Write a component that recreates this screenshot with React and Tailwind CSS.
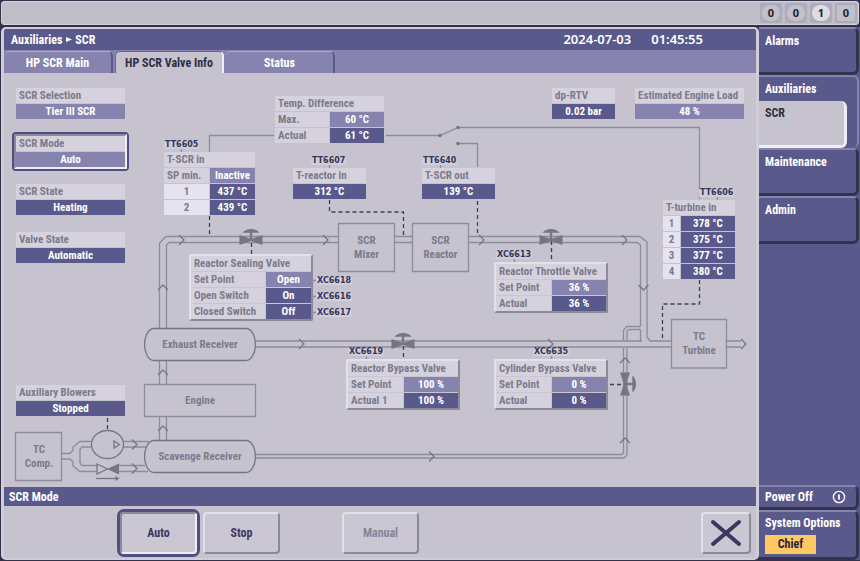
import { useState } from "react";
import clsx from "clsx";

const TABS = ["HP SCR Main", "HP SCR Valve Info", "Status"];

const TONES = {
  dark: "bg-[#5a598b] text-white text-center",
  light: "bg-[#8684af] text-white text-center",
  index: "bg-[#e6e3f0] text-[#7b7b8c] text-center",
  label: "bg-[#d5d2dd] text-[#7b7b8c] text-left pl-[3px]",
};

// Title row on top, then one row per value: [label, value, tone, labelTone]
function Readout({ title, rows, labelWidth = "w-1/2", className }) {
  const hasLabels = rows[0][0] !== "";

  return (
    <table
      className={clsx(
        "border-separate border-spacing-px table-fixed text-[11px] leading-[15px] font-bold whitespace-nowrap",
        className,
      )}
    >
      {hasLabels && (
        <colgroup>
          <col className={labelWidth} />
          <col />
        </colgroup>
      )}
      <thead>
        <tr>
          <th colSpan={hasLabels ? 2 : 1} className={clsx("h-[15px] p-0", TONES.label)}>
            {title}
          </th>
        </tr>
      </thead>
      <tbody>
        {rows.map(([label, value, tone, labelTone = "label"]) => (
          <tr key={label || value}>
            {hasLabels && (
              <th scope="row" className={clsx("h-[15px] p-0", TONES[labelTone])}>
                {label}
              </th>
            )}
            <td className={clsx("h-[15px] p-0", TONES[tone])}>{value}</td>
          </tr>
        ))}
      </tbody>
    </table>
  );
}

// Raised frame round the readout of a valve
function ValveCard({ className, ...readout }) {
  return (
    <div
      className={clsx(
        "absolute rounded-[2px] border-2 border-t-[#e2e0ea] border-l-[#e2e0ea] border-r-[#8c8a98] border-b-[#8c8a98] bg-[#c9c6d2]",
        className,
      )}
    >
      <div className="-m-px">
        <Readout className="w-full" {...readout} />
      </div>
    </div>
  );
}

function Tag({ children, className }) {
  return (
    <span
      className={clsx(
        "absolute bg-[#d0cdd8] px-px font-['DejaVu_Sans',sans-serif] text-[8px] leading-[8px] font-bold text-[#35355a]",
        className,
      )}
    >
      {children}
    </span>
  );
}

function Vessel({ children, className }) {
  return (
    <div
      className={clsx(
        "absolute flex items-center justify-center text-center text-[11px] leading-[14px] font-bold text-[#7b7b8c]",
        className,
      )}
    >
      {children}
    </div>
  );
}

function Valve({ x, y, turn = 0 }) {
  return (
    <g transform={`translate(${x} ${y}) rotate(${turn})`} fill="#757584" stroke="none">
      <path d="M-11.5 -5 L0 -1 L11.5 -5 V5 L0 1 L-11.5 5 Z" />
      <path d="M-8.5 -7.3 Q-5.5 -11 0 -11 Q5.5 -11 8.5 -7.3 Z" />
      <path d="M-1.2 -8 H1.2 V0 H-1.2 Z" />
    </g>
  );
}

function Flow({ x, y, turn = 0 }) {
  return <path transform={`translate(${x} ${y}) rotate(${turn})`} d="M-5 -5 L0 0 L-5 5" stroke="#757584" />;
}

function Piping() {
  return (
    <svg
      className="absolute top-0 left-0 h-[414px] w-[752px]"
      viewBox="4 73 752 414"
      fill="none"
      stroke="#8d8c9b"
      strokeWidth="1.3"
      aria-hidden="true"
    >
      {/* signal lines of the temperature difference */}
      <path d="M209.5 152 V135.5 H274 M386 135.5 H440 L458 127.5 H699.5 V199 M458 143.5 H477.5 V167" />
      <g fill="#757584" stroke="none">
        <circle cx="440" cy="135.5" r="1.8" />
        <circle cx="458" cy="127.5" r="1.8" />
        <circle cx="458" cy="143.5" r="1.8" />
      </g>

      {/* tag ticks */}
      <path d="M181.5 148 V152 M329.5 164 V168 M440.5 164 V168 M717.5 196 V200 M514.5 258 V262 M366.5 355 V359 M551.5 355 V359 M313 280.5 H317 M313 296.5 H317 M313 312.5 H317" />

      {/* exhaust to turbine */}
      <path d="M159.5 328 V243 L166 236.5 H338 M166.5 328 V245 L169 242.5 H338" />
      <path d="M394 236.5 H412 M394 242.5 H412" />
      <path d="M468 236.5 H640 L647 242 V337 L650 341 H671 M468 242.5 H637 L640.5 245 V326.5 M640.5 329.5 V341" />
      <path d="M256 341 H642 M256 347 H671" />
      <path d="M640.5 326.5 H627 L623.5 330 V341 M640.5 329.5 H629 L627 331 V341" />
      <path d="M727 341 H741 M727 347 H741" />

      {/* receiver, engine, scavenge */}
      <path d="M159.5 360 V384 M166.5 360 V384 M159.5 416 V440 M166.5 416 V440" />
      <path d="M256 454.5 H622 L623.5 453 V348 M256 458 H624 L627 455 V348" />

      {/* blower loop */}
      <path d="M62 453.5 H70 L73 450 V447 L80 441.5 H92 M62 459 H70 L73 462 V466 L80 471.5 H97" />
      <path d="M92 447 H82 L80 449 V463 L82 465.5 H97" />
      <path d="M123 441.5 H149 M123 447 H146 M119 465.5 H145 M119 471.5 H148" />

      {/* vessels */}
      <path d="M338.5 223.5 H394.5 V271.5 H338.5 Z M412.5 223.5 H468.5 V271.5 H412.5 Z M671.5 319.5 H726.5 V368 H671.5 Z" />
      <path d="M144.5 384.5 H255.5 V416.5 H144.5 Z M15.5 432.5 H61.5 V480.5 H15.5 Z" />
      <g stroke="#757584" fill="#c6c3cf">
        <path d="M154 328.5 H246 C252 328.5 255.5 337 255.5 344.5 C255.5 352 252 360.5 246 360.5 H154 C148 360.5 144.5 352 144.5 344.5 C144.5 337 148 328.5 154 328.5 Z" />
        <path d="M154 440.5 H246 C252 440.5 255.5 449 255.5 456.5 C255.5 464 252 472.5 246 472.5 H154 C148 472.5 144.5 464 144.5 456.5 C144.5 449 148 440.5 154 440.5 Z" />
        <ellipse cx="107.5" cy="444.5" rx="16" ry="14" />
        <path d="M114 441 L119.5 444.5 L114 448 Z" />
        <path d="M97 464 L107.5 469 L97 474 Z" />
      </g>
      <path d="M107 469 L119 463.5 V474.5 Z" fill="#757584" stroke="none" />
      <path d="M96 478.5 H117" stroke="#757584" />
      <path d="M115.5 476 L119.5 478.5 L115.5 481 Z" fill="#757584" stroke="none" />

      {/* sensor positions */}
      <g stroke="#3f3f55" strokeDasharray="4 3">
        <path d="M209.5 216 V237 M329.5 200 V212 H403.5 V237 M477.5 201 V236 M699.5 280 V304 H662.5 V341" />
        <path d="M251.5 243 V254 M551.5 241 V262 M403.5 346 V359 M107.5 418 V430 M610 384.5 H622" />
      </g>

      <Flow x={184} y={240} />
      <Flow x={328} y={240} />
      <Flow x={484} y={240} />
      <Flow x={627} y={240} />
      <Flow x={304} y={344} />
      <Flow x={553} y={344} />
      <Flow x={746} y={344} />
      <Flow x={434} y={456.5} />
      <Flow x={137} y={444.5} />
      <Flow x={137} y={468.5} />
      <Flow x={163} y={285} turn={-90} />
      <Flow x={163} y={370} turn={-90} />
      <Flow x={163} y={426} turn={-90} />
      <Flow x={625} y={358} turn={-90} />
      <Flow x={625} y={438} turn={-90} />
      <Flow x={643.5} y={290} turn={90} />

      <Valve x={251} y={240} />
      <Valve x={551} y={240} />
      <Valve x={403} y={344} />
      <Valve x={625} y={384} turn={90} />
    </svg>
  );
}

function StatusColumn() {
  return (
    <div className="relative flex w-[117px] flex-col gap-3">
      <Readout className="mx-[3px]" title="SCR Selection" rows={[["", "Tier III SCR", "light"]]} />
      <button
        type="button"
        className="h-[39px] rounded-[4px] border-2 border-[#4f4e85] bg-[#c6c3cf] text-[11px] leading-[15px] font-bold"
      >
        <span className="flex h-full flex-col gap-px border-2 border-t-[#8c8a98] border-l-[#8c8a98] border-r-[#efedf5] border-b-[#efedf5]">
          <span className={clsx("block", TONES.label)}>SCR Mode</span>
          <span className={clsx("block", TONES.light)}>Auto</span>
        </span>
      </button>
      <div className="mx-[3px] flex flex-col gap-[15px]">
        <Readout title="SCR State" rows={[["", "Heating", "dark"]]} />
        <Readout title="Valve State" rows={[["", "Automatic", "dark"]]} />
      </div>
      <Readout className="mx-[3px] mt-auto" title="Auxiliary Blowers" rows={[["", "Stopped", "dark"]]} />
    </div>
  );
}

function Diagram() {
  return (
    <div className="relative flex min-h-[414px] min-w-[752px] flex-1 justify-between px-2 pt-[14px] pb-[70px]">
      <Piping />
      <StatusColumn />
      <div className="relative flex items-start gap-[18px] pr-[3px]">
        <Readout className="w-[65px]" title="dp-RTV" rows={[["", "0.02 bar", "dark"]]} />
        <Readout className="w-[111px]" title="Estimated Engine Load" rows={[["", "48 %", "light"]]} />
      </div>

      <Vessel className="top-[150px] left-[334px] h-[49px] w-[57px]">SCR<br />Mixer</Vessel>
      <Vessel className="top-[150px] left-[408px] h-[49px] w-[57px]">SCR<br />Reactor</Vessel>
      <Vessel className="top-[246px] left-[667px] h-[49px] w-[56px]">TC<br />Turbine</Vessel>
      <Vessel className="top-[255px] left-[140px] h-[33px] w-[112px]">Exhaust Receiver</Vessel>
      <Vessel className="top-[311px] left-[140px] h-[33px] w-[112px]">Engine</Vessel>
      <Vessel className="top-[367px] left-[140px] h-[33px] w-[112px]">Scavenge Receiver</Vessel>
      <Vessel className="top-[359px] left-[11px] h-[49px] w-[48px]">TC<br />Comp.</Vessel>

      <Readout
        className="absolute top-[22px] left-[270px] w-[111px]"
        title="Temp. Difference"
        rows={[["Max.", "60 °C", "light"], ["Actual", "61 °C", "dark"]]}
      />
      <Readout
        className="absolute top-[78px] left-[159px] w-[93px]"
        title="T-SCR in"
        rows={[["SP min.", "Inactive", "light"], ["1", "437 °C", "dark", "index"], ["2", "439 °C", "dark", "index"]]}
      />
      <Readout className="absolute top-[94px] left-[288px] w-[75px]" title="T-reactor in" rows={[["", "312 °C", "dark"]]} />
      <Readout className="absolute top-[94px] left-[417px] w-[75px]" title="T-SCR out" rows={[["", "139 °C", "dark"]]} />
      <Readout
        className="absolute top-[126px] left-[658px] w-[74px]"
        labelWidth="w-[17px]"
        title="T-turbine in"
        rows={[
          ["1", "378 °C", "dark", "index"],
          ["2", "375 °C", "dark", "index"],
          ["3", "377 °C", "dark", "index"],
          ["4", "380 °C", "dark", "index"],
        ]}
      />

      <ValveCard
        className="top-[181px] left-[185px] w-[124px]"
        labelWidth="w-[74px]"
        title="Reactor Sealing Valve"
        rows={[["Set Point", "Open", "light"], ["Open Switch", "On", "dark"], ["Closed Switch", "Off", "dark"]]}
      />
      <ValveCard
        className="top-[189px] left-[490px] w-[114px]"
        labelWidth="w-[55px]"
        title="Reactor Throttle Valve"
        rows={[["Set Point", "36 %", "light"], ["Actual", "36 %", "dark"]]}
      />
      <ValveCard
        className="top-[286px] left-[342px] w-[114px]"
        labelWidth="w-[55px]"
        title="Reactor Bypass Valve"
        rows={[["Set Point", "100 %", "light"], ["Actual 1", "100 %", "dark"]]}
      />
      <ValveCard
        className="top-[286px] left-[490px] w-[114px]"
        labelWidth="w-[55px]"
        title="Cylinder Bypass Valve"
        rows={[["Set Point", "0 %", "light"], ["Actual", "0 %", "dark"]]}
      />

      <Tag className="top-[68px] left-[160px]">TT6605</Tag>
      <Tag className="top-[84px] left-[307px]">TT6607</Tag>
      <Tag className="top-[84px] left-[418px]">TT6640</Tag>
      <Tag className="top-[116px] left-[695px]">TT6606</Tag>
      <Tag className="top-[204px] left-[312px]">XC6618</Tag>
      <Tag className="top-[220px] left-[312px]">XC6616</Tag>
      <Tag className="top-[236px] left-[312px]">XC6617</Tag>
      <Tag className="top-[178px] left-[492px]">XC6613</Tag>
      <Tag className="top-[275px] left-[344px]">XC6619</Tag>
      <Tag className="top-[275px] left-[529px]">XC6635</Tag>
    </div>
  );
}

function ModeButton({ children, selected, className, ...props }) {
  return (
    <span className={clsx("rounded-[7px] border-[3px]", selected ? "border-[#4f4e85]" : "border-transparent")}>
      <button
        type="button"
        className={clsx(
          "flex h-[42px] items-center justify-center rounded-[4px] border-2 bg-[#cac7d3] font-bold text-[#3a3861] disabled:text-[#85849a]",
          selected
            ? "border-t-[#8c8a98] border-l-[#8c8a98] border-r-[#efedf5] border-b-[#efedf5]"
            : "border-t-[#e2e0ea] border-l-[#e2e0ea] border-r-[#8c8a98] border-b-[#8c8a98]",
          className,
        )}
        {...props}
      >
        {children}
      </button>
    </span>
  );
}

const sideButton =
  "block rounded-r-[6px] border-t-2 border-r-[3px] border-b-[3px] border-t-[#8684af] border-r-[#34334f] border-b-[#34334f] bg-[#5a598b] px-1.5 text-left leading-4 font-bold text-white";

function App() {
  const [tab, setTab] = useState("HP SCR Valve Info");
  const [mode, setMode] = useState("Auto");

  return (
    <div className="flex min-h-screen flex-col bg-[#33324a] pt-px pb-px pl-px font-['Roboto_Condensed',Roboto,sans-serif] text-[12px]">
      <header className="mr-px flex h-6 items-center justify-end gap-[3px] rounded-[3px] border border-[#d3d2da] bg-[#bfbec8] pr-px font-bold text-[#22222c]">
        {["0", "0", "1", "0"].map((count, i) => (
          <span key={i} className="flex h-5 w-[22px] items-center justify-center rounded-[2px] bg-[#adacba]">
            <span
              className={clsx(
                "flex h-4 w-[18px] items-center justify-center font-['Noto_Sans',sans-serif] text-[11px]",
                i === 3 ? "rounded-[2px]" : "rounded-full",
                count === "1" ? "bg-[#dddbe5]" : "bg-[#c3c0cb]",
              )}
            >
              {count}
            </span>
          </span>
        ))}
      </header>

      <div className="mt-0.5 flex flex-1">
        <main className="flex flex-1 flex-col rounded-[5px] border-x-[3px] border-y-2 border-[#cfcdd7] bg-[#c6c3cf]">
          <div className="flex h-[21px] items-center rounded-t-[2px] bg-[#5a598b] pr-[53px] pl-[7px] font-bold text-white">
            <h1 className="flex items-center gap-[3px]">
              Auxiliaries
              <svg className="size-[7px]" viewBox="0 0 7 7" fill="currentColor" aria-hidden="true">
                <path d="M1 1 L7 3.5 L1 6 Z" />
              </svg>
              SCR
            </h1>
            <p className="ml-auto flex gap-5 font-['Noto_Sans',sans-serif] text-[13px] font-semibold">
              <span>2024-07-03</span>
              <span>01:45:55</span>
            </p>
          </div>

          <nav className="flex h-[23px] items-end gap-0.5 bg-[#8684af]">
            {TABS.map((name) => (
              <button
                key={name}
                type="button"
                onClick={() => setTab(name)}
                className={clsx(
                  "h-[22px] w-[109px] rounded-t-[5px] font-bold",
                  name === tab
                    ? "border-t border-r-2 border-l border-t-[#6b6a83] border-r-[#efedf5] border-l-[#6b6a83] bg-[#c6c3cf] text-[#2f2e44]"
                    : "border-t border-r-2 border-t-[#aaa8cc] border-r-[#5a598b] bg-[#8684af] text-white",
                )}
              >
                {name}
              </button>
            ))}
          </nav>

          <Diagram />

          <h2 className="h-[19px] bg-[#5a598b] px-[5px] pt-px leading-[19px] font-bold text-white">SCR Mode</h2>
          <div className="flex h-[52px] items-center pt-px pr-[5px] pl-[113px]">
            <ModeButton className="w-[77px]" selected={mode === "Auto"} onClick={() => setMode("Auto")}>
              Auto
            </ModeButton>
            <ModeButton className="w-[77px]" selected={mode === "Stop"} onClick={() => setMode("Stop")}>
              Stop
            </ModeButton>
            <span className="w-14" />
            <ModeButton className="w-[77px]" disabled>
              Manual
            </ModeButton>
            <span className="ml-auto">
              <ModeButton className="w-[50px]" aria-label="Close">
                <svg className="h-[28px] w-[32px]" viewBox="0 0 32 28" stroke="#3a3861" strokeWidth="4" strokeLinecap="round">
                  <path d="M3 3 L29 25 M29 3 L3 25" />
                </svg>
              </ModeButton>
            </span>
          </div>
        </main>

        <aside className="flex w-[101px] flex-col bg-[#5a598b] pr-px">
          <button type="button" className={clsx(sideButton, "h-12 pb-5")}>
            Alarms
          </button>
          <div className="h-[73px] rounded-r-[6px] border-t-2 border-r-2 border-[#8684af] bg-[#5a598b] leading-4 font-bold">
            <button type="button" className="block h-6 px-1.5 text-left text-white">
              Auxiliaries
            </button>
            <button
              type="button"
              className="block h-[47px] w-[88px] rounded-r-[6px] border-r-[3px] border-b-[3px] border-[#efedf5] bg-[#c6c3cf] px-1.5 pb-5 text-left text-[#2f2e44]"
            >
              SCR
            </button>
          </div>
          <button type="button" className={clsx(sideButton, "h-12 pb-5")}>
            Maintenance
          </button>
          <button type="button" className={clsx(sideButton, "h-12 pb-5")}>
            Admin
          </button>

          <button type="button" className={clsx(sideButton, "mt-auto h-[25px]")}>
            <span className="flex items-center justify-between pr-1">
              Power Off
              <svg className="size-[14px]" viewBox="0 0 14 14" fill="none" stroke="currentColor" strokeWidth="1.4" aria-hidden="true">
                <circle cx="7" cy="7" r="5.6" />
                <path d="M7 4.5 V9.5" strokeWidth="1.8" />
              </svg>
            </span>
          </button>
          <button type="button" className={clsx(sideButton, "h-[50px] whitespace-nowrap")}>
            System Options
            <span className="mt-1 block h-[19px] w-[51px] bg-[#ffc862] text-center leading-[19px] text-[#26243a]">Chief</span>
          </button>
        </aside>
      </div>
    </div>
  );
}

export default App;
